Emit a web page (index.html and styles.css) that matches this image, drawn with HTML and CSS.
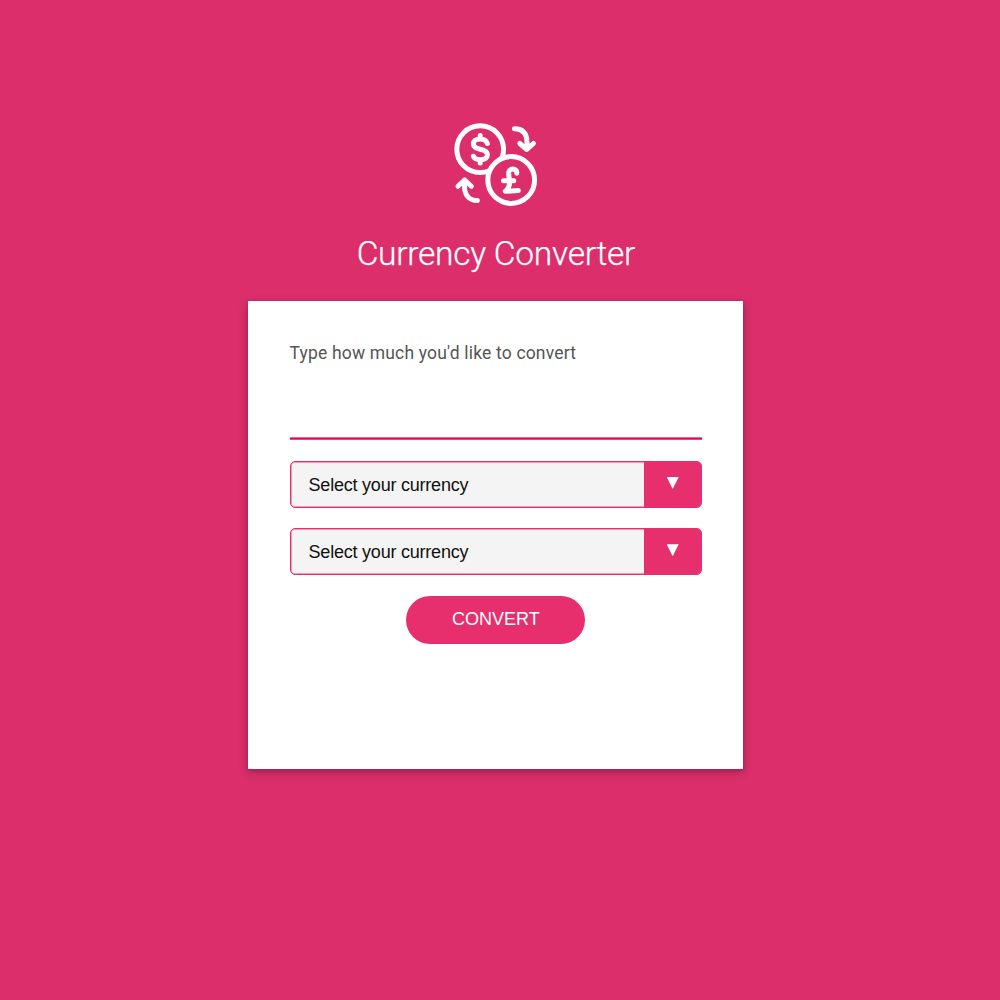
FILE: index.html
```html
<!DOCTYPE html>
<html lang="en">
<head>
<meta charset="utf-8">
<title>Currency Converter</title>
<link rel="stylesheet" href="styles.css">
</head>
<body>
<main class="converter">
  <svg class="logo" viewBox="0 0 100 100" fill="none" stroke="#fff" stroke-width="5" stroke-linecap="round" stroke-linejoin="round" aria-hidden="true">
    <circle cx="35.2" cy="34.2" r="23.4"/>
    <circle class="coin-front" cx="66.2" cy="65" r="23.4"/>
    <path d="M42.3 28.5C41.2 25.2 38.6 24 35.2 24C30.9 24 28.4 25.8 28.4 28.7C28.4 32.1 31 33.3 35.2 34.2C39.8 35.1 42.4 36.7 42.4 39.8C42.4 42.9 39.8 44.7 35.5 44.7C31.7 44.7 29 43.7 28.4 41.2M35.2 20.5V24M35.2 44.7V48"/>
    <path d="M71.8 58.2C72 55.5 70.2 54.1 67.9 54.1C65.1 54.1 63.5 56 63.7 59L64.5 66C64.8 70 63.3 74.1 60.3 76.3L73.3 75.6M58.5 65.8H68.8"/>
    <path d="M69.5 13.7C78 13.7 82 19 82 28V33.5M74.8 28.5L81.8 34.5L88.4 28.5"/>
    <path d="M32.3 85.6C24 85.6 19.5 80 19.5 71V65.5M13 71.3L19.6 65L26.3 71.3"/>
  </svg>
  <h1 class="title">Currency Converter</h1>
  <form class="card">
    <label class="amount-label" for="amount">Type how much you'd like to convert</label>
    <input class="amount" id="amount" type="text">
    <div class="select" role="button"><span class="select-text">Select your currency</span><span class="select-toggle"><span class="arrow"></span></span></div>
    <div class="select" role="button"><span class="select-text">Select your currency</span><span class="select-toggle"><span class="arrow"></span></span></div>
    <button class="convert" type="button">CONVERT</button>
  </form>
</main>
</body>
</html>
```
FILE: styles.css
```css
* { box-sizing: border-box; }
body {
  margin: 0;
  min-height: 1000px;
  background: #db2e6b;
  font-family: Roboto, sans-serif;
}
.converter {
  display: flex;
  flex-direction: column;
  align-items: center;
  width: 495px;
  margin-left: 248.4px;
  padding-top: 115px;
}
.logo { width: 100px; height: 100px; margin-right: 2px; }
.coin-front { fill: #db2e6b; }
.title {
  margin: 19px 0 27px;
  color: #fff;
  font-size: 33.5px;
  font-weight: 300;
  letter-spacing: -.26px;
  line-height: 40px;
  white-space: nowrap;
  -webkit-text-stroke: .25px #fff;
}
.card {
  display: flex;
  flex-direction: column;
  width: 495px;
  height: 468px;
  padding: 41px 41.2px;
  background: #fff;
  box-shadow: 0 2px 5px rgba(0, 0, 0, .2), 0 3px 10px rgba(0, 0, 0, .16);
}
.amount-label {
  padding-top: 1px;
  color: #555;
  font-size: 17.5px;
  letter-spacing: .17px;
  line-height: 21px;
}
.amount {
  height: 57px;
  margin: 19px 0 21px;
  padding: 0;
  border: 0;
  outline: 0;
  background: linear-gradient(#ee6699 0 1px, #e00658 1px 2px, #ea4680 2px) bottom / 100% 3px no-repeat;
  font: 18px "Liberation Sans", sans-serif;
}
.select {
  display: flex;
  height: 47px;
  margin-bottom: 20.3px;
  overflow: hidden;
  border: 1px solid #e62f6c;
  border-radius: 5px;
  background: #f4f4f4;
  box-shadow: inset 0 0 0 1px #f09cb9;
}
.select-text {
  flex: 1;
  padding-left: 18px;
  color: #111;
  font: 18px/46px "Liberation Sans", Arial, sans-serif;
  letter-spacing: -.22px;
}
.select-toggle {
  display: flex;
  justify-content: center;
  width: 57px;
  padding-top: 15px;
  background: #e62f6c;
}
.arrow {
  width: 12px;
  height: 12px;
  background: #fff;
  clip-path: polygon(0 0, 100% 0, 50% 100%);
}
.convert {
  align-self: center;
  width: 179px;
  height: 48px;
  padding: 0;
  border: 0;
  border-radius: 24px;
  background: #e62f6c;
  color: #fff;
  font: 18px "Liberation Sans", Arial, sans-serif;
}
```
